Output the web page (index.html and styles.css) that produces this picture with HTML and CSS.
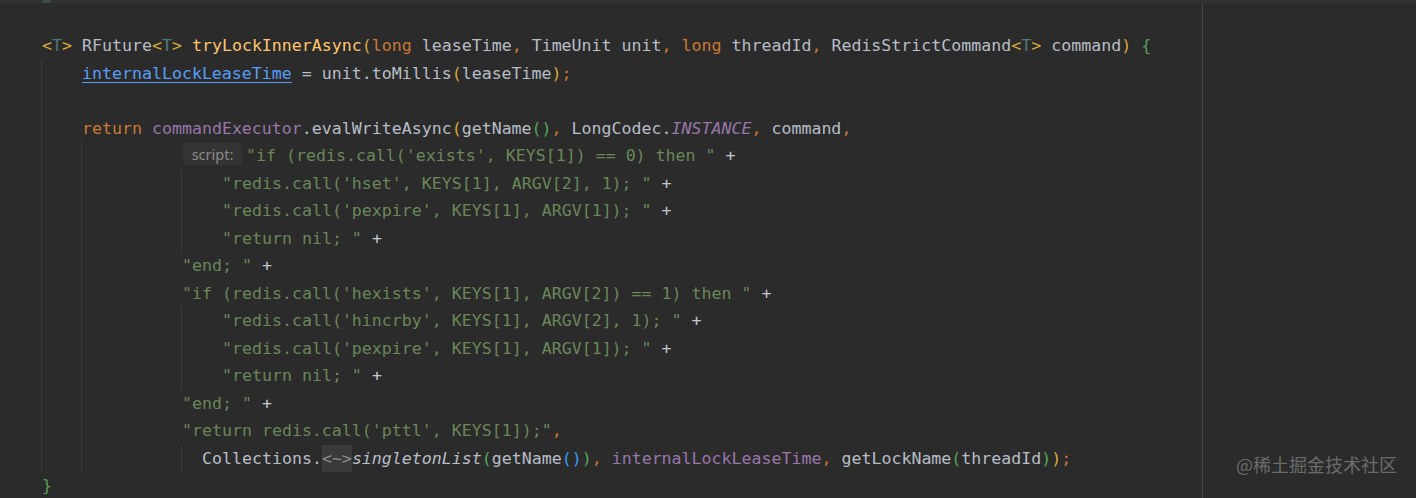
FILE: index.html
```html
<!DOCTYPE html>
<html>
<head>
<meta charset="utf-8">
<link rel="stylesheet" href="styles.css">
</head>
<body>
<div class="editor">
  <div class="topstrip"><span class="topmark"></span></div>
  <div class="main">
    <div class="code">
      <div class="line l0"><span class="b1">&lt;</span><span class="tp">T</span><span class="b1">&gt;</span> RFuture<span class="b1">&lt;</span><span class="tp">T</span><span class="b1">&gt;</span> <span class="md">tryLockInnerAsync</span><span class="b1">(</span><span class="kw">long</span> leaseTime<span class="kw">,</span> TimeUnit unit<span class="kw">,</span> <span class="kw">long</span> threadId<span class="kw">,</span> RedisStrictCommand<span class="b1">&lt;</span><span class="tp">T</span><span class="b1">&gt;</span> command<span class="b1">)</span> <span class="br">{</span></div>
      <div class="block body">
        <div class="line l1"><span class="link">internalLockLeaseTime</span> = unit.toMillis<span class="b1">(</span>leaseTime<span class="b1">)</span><span class="kw">;</span></div>
        <div class="line l1"></div>
        <div class="line l1"><span class="kw">return</span> <span class="fd">commandExecutor</span>.evalWriteAsync<span class="b1">(</span>getName<span class="b2">()</span><span class="kw">,</span> LongCodec.<span class="fd it">INSTANCE</span><span class="kw">,</span> command<span class="kw">,</span></div>
        <div class="block cont">
          <div class="line l2"><span class="hint">script:</span><span class="str">"if (redis.call('exists', KEYS[1]) == 0) then "</span> <span class="op">+</span></div>
          <div class="block inner">
            <div class="line l3"><span class="str">"redis.call('hset', KEYS[1], ARGV[2], 1); "</span> <span class="op">+</span></div>
            <div class="line l3"><span class="str">"redis.call('pexpire', KEYS[1], ARGV[1]); "</span> <span class="op">+</span></div>
            <div class="line l3"><span class="str">"return nil; "</span> <span class="op">+</span></div>
          </div>
          <div class="line l2"><span class="str">"end; "</span> <span class="op">+</span></div>
          <div class="line l2"><span class="str">"if (redis.call('hexists', KEYS[1], ARGV[2]) == 1) then "</span> <span class="op">+</span></div>
          <div class="block inner">
            <div class="line l3"><span class="str">"redis.call('hincrby', KEYS[1], ARGV[2], 1); "</span> <span class="op">+</span></div>
            <div class="line l3"><span class="str">"redis.call('pexpire', KEYS[1], ARGV[1]); "</span> <span class="op">+</span></div>
            <div class="line l3"><span class="str">"return nil; "</span> <span class="op">+</span></div>
          </div>
          <div class="line l2"><span class="str">"end; "</span> <span class="op">+</span></div>
          <div class="line l2"><span class="str">"return redis.call('pttl', KEYS[1]);"</span><span class="kw">,</span></div>
          <div class="block inner">
            <div class="line l4">Collections.<span class="fold">&lt;~&gt;</span><span class="it">singletonList</span><span class="b2">(</span>getName<span class="b3">()</span><span class="b2">)</span><span class="kw">,</span> <span class="fd">internalLockLeaseTime</span><span class="kw">,</span> getLockName<span class="b2">(</span>threadId<span class="b2">)</span><span class="b1">)</span><span class="kw">;</span></div>
          </div>
        </div>
      </div>
      <div class="line l0"><span class="br">}</span></div>
    </div>
    <div class="side">
      <span class="watermark">@稀土掘金技术社区</span>
    </div>
  </div>
</div>
</body>
</html>
```

FILE: styles.css
```css
html, body {
  margin: 0;
  padding: 0;
  background: #2b2b2b;
}

.editor {
  width: 1416px;
  height: 498px;
  background: #2b2b2b;
  overflow: hidden;
  display: flex;
  flex-direction: column;
}

.topstrip {
  height: 3px;
  background: #313131;
  flex: none;
  display: flex;
}

.topmark {
  margin-left: 42px;
  width: 9px;
  height: 3px;
  background: #3f4b45;
}

.main {
  flex: 1;
  display: flex;
}

.code {
  width: 1202px;
  flex: none;
  padding-top: 29.25px;
  font-family: "DejaVu Sans Mono", "Liberation Mono", monospace;
  font-size: 16.6px;
  color: #b7bec7;
}

.side {
  flex: 1;
  border-left: 1px solid #454545;
  position: relative;
}

.line {
  height: 27.5px;
  line-height: 27.5px;
  white-space: pre;
}

.l0 { padding-left: 42px; }
.l1 { padding-left: 40px; }
.l2 { padding-left: 100px; }
.l3 { padding-left: 40px; }
.l4 { padding-left: 20px; }

.block {
  border-left: 1px solid #3a3a3a;
}

.body { margin-left: 41px; }
.cont { margin-left: 39px; }
.inner { margin-left: 99px; }

.kw { color: #cc7832; }
.md { color: #ffc66d; }
.tp { color: #507874; }
.fd { color: #9876aa; }
.it { font-style: italic; }
.str { color: #6a8759; }
.op { color: #c3c8ce; }
.b1 { color: #d9a93a; }
.b2 { color: #54a857; }
.b3 { color: #359ff4; }
.br { color: #5a9e5a; }

.link {
  color: #589df6;
  text-decoration: underline;
  text-underline-offset: 3px;
}

.hint {
  display: inline-block;
  margin-left: 1px;
  margin-right: 4px;
  width: 59px;
  height: 22px;
  line-height: 22px;
  vertical-align: 1px;
  text-align: center;
  background: #333333;
  border-radius: 4px;
  color: #8a8a8a;
  font-family: "Noto Sans", "Open Sans", sans-serif;
  font-size: 14.5px;
}

.fold {
  display: inline-block;
  height: 27.5px;
  vertical-align: top;
  background: #3a3a3a;
  color: #8c8c8c;
}

.watermark {
  position: absolute;
  left: 33px;
  top: 448px;
  font-family: "Noto Sans CJK SC", "Noto Sans", sans-serif;
  font-size: 18px;
  color: #6b6b6b;
  white-space: nowrap;
}
```
